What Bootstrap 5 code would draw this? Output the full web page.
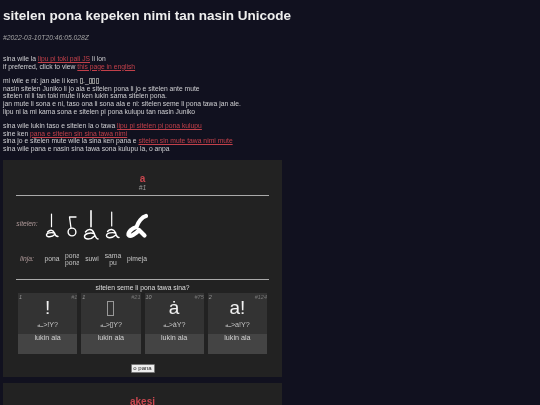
<!DOCTYPE html>
<html lang="tok">
<head>
<meta charset="utf-8">
<title>sitelen pona</title>
<link href="https://cdn.jsdelivr.net/npm/bootstrap@5.3.0/dist/css/bootstrap.min.css" rel="stylesheet">
<style>
html,body{height:405px;overflow:hidden}
body{background:#11111f;color:#cfcfd2;font:6.75px/7.6px "Liberation Sans",Arial,sans-serif;padding:0 3px;will-change:transform}
a{color:#c2404a}
.page-title{font:bold 13.5px/18px "Liberation Sans",Arial,sans-serif;color:#eeeeee;margin:7px 0 0}
.stamp{font-style:italic;color:#a5a5a5;margin:7.5px 0 13.5px;line-height:9px}
.para{margin:0 0 7px}
.box{display:inline-block;width:3px;height:6px;border:.5px solid #888;vertical-align:-1px;margin-right:.5px}
.word-card{background:#222;border:0;border-radius:0;width:279px;padding:13px 13px 4px;margin-bottom:6px;color:#d2d2d2;text-align:center}
.word-name{font:bold 10px/11px "Liberation Sans",Arial,sans-serif;color:#c8474f}
.word-id{font-style:italic;color:#999;line-height:8px;margin-bottom:3px}
.rule{height:1px;background:#aaa}
.forms{border-collapse:collapse;align-self:flex-start;margin-bottom:12px;text-align:center}
.forms th{font-weight:400;font-style:italic;color:#b09a9a;width:26px;padding:0 4px 0 0;text-align:center}
.forms td{padding:0;vertical-align:middle}
.forms svg{display:block;margin:auto;fill:none;stroke:#fff;stroke-linecap:round;stroke-linejoin:round}
.row-glyph{height:56px}
.row-glyph td{padding-top:2px}
.row-name{height:15px;color:#c4c4c4}
.clip{display:block;width:14px;overflow:hidden;white-space:nowrap;margin:auto}
.question{margin-top:4px;line-height:7.6px;color:#ddd}
.tiles{gap:4px;padding:0 2px;margin-top:2px}
.tile{width:59.5px;height:61px;background:#444}
.tile-top{height:41px;background:#333;position:relative;padding-top:2.500px}
.tile-count{position:absolute;left:1px;top:1px;color:#999;font-size:5.5px;font-style:italic;line-height:6px}
.tile-id{position:absolute;right:0;top:1px;color:#777;font-size:5.5px;font-style:italic;line-height:6px}
.tile-big{font-size:19px;line-height:24px;height:24px;color:#f2f2f2}
.tile-sub{font-size:7.2px;line-height:8px;color:#c4c4c4;margin-top:1px}
.tile-label{color:#d2d2d2;font-size:7.200px;line-height:7.6px}
.big-box{display:inline-block;width:7px;height:15px;border:1px solid #999;vertical-align:-2px}
.send{font:6px/7px "Liberation Sans",Arial,sans-serif;background:#eee;color:#222;border:1px solid #777;border-radius:1px;padding:0;width:24px;height:9px;display:block;margin:10px auto 0}
</style>
</head>
<body>
<h1 class="page-title">sitelen pona kepeken nimi tan nasin Unicode</h1>
<p class="stamp">#2022-03-10T20:46:05.028Z</p>
<p class="para">sina wile la <a href="#">lipu pi toki pali JS</a> li lon<br>if preferred, click to view <a href="#">this page in english</a></p>
<p class="para">mi wile e ni: jan ale li ken <span class="box"></span>._<span class="box"></span><span class="box"></span><span class="box"></span><br>nasin sitelen Juniko li jo ala e sitelen pona li jo e sitelen ante mute<br>sitelen ni li tan toki mute li ken lukin sama sitelen pona.<br>jan mute li sona e ni, taso ona li sona ala e ni: sitelen seme li pona tawa jan ale.<br>lipu ni la mi kama sona e sitelen pi pona kulupu tan nasin Juniko</p>
<p class="para">sina wile lukin taso e sitelen la o tawa <a href="#">lipu pi sitelen pi pona kulupu</a><br>sine ken <a href="#">pana e sitelen sin sina tawa nimi</a><br>sina jo e sitelen mute wile la sina ken pana e <a href="#">sitelen sin mute tawa nimi mute</a><br>sina wile pana e nasin sina tawa sona kulupu la, o anpa</p>

<div class="card word-card">
  <div class="word-name">a</div>
  <div class="word-id">#1</div>
  <div class="rule"></div>
  <table class="forms">
    <tr class="row-glyph">
      <th>sitelen:</th>
      <td><svg width="20" height="31" viewBox="0 0 20 31"><path d="M9.500 5V17.700" stroke-width="1.200"/><path d="M5.500 23C8 20.500 11 20.500 12.500 24C13 26 14.500 27.500 16 27.500M12.500 24C9 23 4.500 24 4.500 26C4.500 28.500 10 28.500 12.800 25.500" stroke-width="1.400"/></svg></td>
      <td><svg width="20" height="31" viewBox="0 0 20 31"><path d="M14 8H7.500L9 19" stroke-width="1.300"/><circle cx="10" cy="23" r="3.900" stroke-width="1.400"/></svg></td>
      <td><svg width="20" height="31" viewBox="0 0 20 31"><path d="M9 1.700V17.700" stroke-width="1.600"/><path d="M3.500 23C6 19.500 10 19.500 12 24C13 27 14.500 30 16 30M12 24.500C8 23.500 2.500 24.500 2.500 27.500C2.500 31 9 31 12.500 27" stroke-width="1.500"/></svg></td>
      <td><svg width="22" height="31" viewBox="0 0 22 31"><path d="M9.700 3V17" stroke-width="1.200"/><path d="M5.500 22.500C8 19.500 11.500 20 13.500 23.500C14 26 15.500 28.500 17 28.500M13.500 24C10 23 4.500 24 4.500 26.500C4.500 29.500 10 29.500 14 26" stroke-width="1.400"/></svg></td>
      <td><svg width="26" height="31" viewBox="0 0 26 31"><path d="M22 7C18 8 14 13 12.500 18C8 19 4 23 4.500 26C6 28.500 12 25 15 21L20.500 26.500" stroke-width="4.200"/></svg></td>
    </tr>
    <tr class="row-name">
      <th>linja:</th>
      <td>pona</td>
      <td><span class="clip">pona<br>pona</span></td>
      <td>suwi</td>
      <td>sama<br>pu</td>
      <td>pimeja</td>
    </tr>
  </table>
  <div class="rule"></div>
  <div class="question">sitelen seme li pona tawa sina?</div>
  <div class="d-flex tiles">
    <div class="tile"><div class="tile-top"><span class="tile-count">1</span><span class="tile-id">#1</span><div class="tile-big">!</div><div class="tile-sub">ـه&gt;!Y?</div></div><div class="tile-label">lukin ala</div></div>
    <div class="tile"><div class="tile-top"><span class="tile-count">1</span><span class="tile-id">#21</span><div class="tile-big"><span class="big-box"></span></div><div class="tile-sub">ـه&gt;<span class="box"></span>Y?</div></div><div class="tile-label">lukin ala</div></div>
    <div class="tile"><div class="tile-top"><span class="tile-count">10</span><span class="tile-id">#75</span><div class="tile-big">ȧ</div><div class="tile-sub">ـه&gt;ȧY?</div></div><div class="tile-label">lukin ala</div></div>
    <div class="tile"><div class="tile-top"><span class="tile-count">2</span><span class="tile-id">#124</span><div class="tile-big">a!</div><div class="tile-sub">ـه&gt;a!Y?</div></div><div class="tile-label">lukin ala</div></div>
  </div>
  <button class="send" type="button">o pana</button>
</div>
<div class="card word-card">
  <div class="word-name">akesi</div>
</div>
</body>
</html>
